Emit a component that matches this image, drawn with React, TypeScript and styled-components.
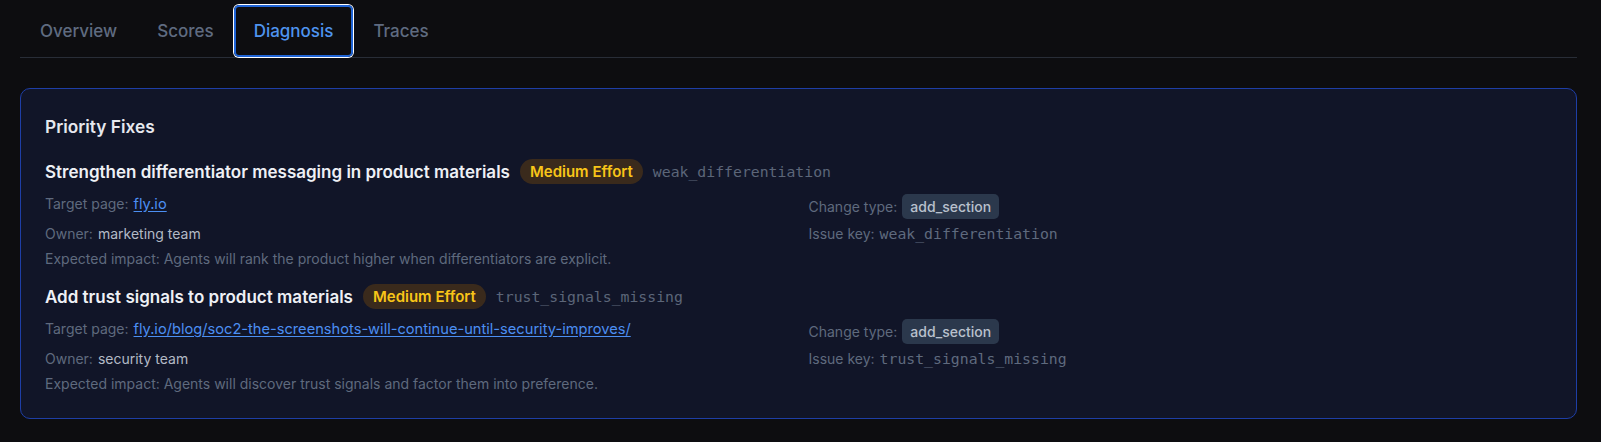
import styled, { createGlobalStyle } from "styled-components";

const GlobalStyle = createGlobalStyle`
  html, body {
    margin: 0;
    padding: 0;
    background: #0d0d10;
  }
  body {
    font-family: Inter, "Noto Sans", sans-serif;
    -webkit-font-smoothing: antialiased;
  }
`;

const Page = styled.div`
  padding: 5px 24px 23px 20px;
  background: #0d0d10;
  min-height: 100vh;
  box-sizing: border-box;
`;

const TabBar = styled.div`
  display: flex;
  border-bottom: 1px solid #282d37;
`;

const Tab = styled.button<{ $active?: boolean }>`
  height: 52px;
  padding: 0 20px;
  border: none;
  border-radius: 5px;
  background: transparent;
  font-family: inherit;
  font-size: 17px;
  font-weight: 500;
  color: ${(p) => (p.$active ? "#4f94ef" : "#5f6b80")};
  box-shadow: ${(p) => (p.$active ? "inset 0 0 0 2px #1f64d6, 0 0 0 1px #ffffff" : "none")};
  cursor: pointer;
`;

const Card = styled.section`
  margin-top: 30px;
  border: 1px solid #1e3ea6;
  border-radius: 10px;
  background: #111528;
  padding: 24px;
`;

const Heading = styled.h3`
  margin: 0 0 18px;
  font-size: 17.3px;
  line-height: 28px;
  font-weight: 600;
  color: #e6e8ee;
`;

const FixList = styled.div`
  display: flex;
  flex-direction: column;
  gap: 15px;
`;

const Fix = styled.div`
  display: flex;
  flex-direction: column;
  gap: 10px;
`;

const TitleRow = styled.div`
  display: flex;
  align-items: center;
  gap: 10px;
  height: 25px;
`;

const Title = styled.span`
  font-size: 17px;
  font-weight: 600;
  color: #eef0f5;
`;

const EffortBadge = styled.span`
  display: inline-flex;
  align-items: center;
  height: 25px;
  padding: 0 10px;
  border-radius: 999px;
  background: #3a2a1c;
  color: #f8c518;
  font-size: 15px;
  font-weight: 600;
`;

const Mono = styled.span<{ $color?: string }>`
  font-family: "DejaVu Sans Mono", "Liberation Mono", monospace;
  font-size: 14.8px;
  color: ${(p) => p.$color ?? "#5c6679"};
`;

const Details = styled.div`
  display: grid;
  grid-template-columns: 1fr 1fr;
  column-gap: 20px;
  row-gap: 5px;
  font-size: 14px;
  line-height: 20px;
  color: #5f6a7e;
`;

const Field = styled.div<{ $top?: boolean }>`
  display: flex;
  align-items: center;
  gap: 5px;
  min-height: 20px;
  align-self: ${(p) => (p.$top ? "start" : "center")};
`;

const Value = styled.span`
  color: #b3bac6;
`;

const PageLink = styled.a`
  color: #4c8ff2;
  text-decoration: underline;
  text-underline-offset: 2px;
  font-size: 14.65px;
`;

const Chip = styled.span`
  display: inline-flex;
  align-items: center;
  height: 25px;
  padding: 0 8px;
  border-radius: 5px;
  background: #2b384c;
  color: #b9c1cd;
  font-size: 14px;
  font-weight: 500;
`;

type FixItem = {
  title: string;
  key: string;
  target: string;
  owner: string;
  impact: string;
  changeType: string;
};

const fixes: FixItem[] = [
  {
    title: "Strengthen differentiator messaging in product materials",
    key: "weak_differentiation",
    target: "fly.io",
    owner: "marketing team",
    impact: "Agents will rank the product higher when differentiators are explicit.",
    changeType: "add_section",
  },
  {
    title: "Add trust signals to product materials",
    key: "trust_signals_missing",
    target: "fly.io/blog/soc2-the-screenshots-will-continue-until-security-improves/",
    owner: "security team",
    impact: "Agents will discover trust signals and factor them into preference.",
    changeType: "add_section",
  },
];

const tabs = ["Overview", "Scores", "Diagnosis", "Traces"];

export default function App() {
  return (
    <>
      <GlobalStyle />
      <Page>
        <TabBar>
          {tabs.map((t) => (
            <Tab key={t} $active={t === "Diagnosis"}>
              {t}
            </Tab>
          ))}
        </TabBar>
        <Card>
          <Heading>Priority Fixes</Heading>
          <FixList>
            {fixes.map((f) => (
              <Fix key={f.key}>
                <TitleRow>
                  <Title>{f.title}</Title>
                  <EffortBadge>Medium Effort</EffortBadge>
                  <Mono>{f.key}</Mono>
                </TitleRow>
                <Details>
                  <Field $top>
                    Target page: <PageLink href="#">{f.target}</PageLink>
                  </Field>
                  <Field>
                    Change type: <Chip>{f.changeType}</Chip>
                  </Field>
                  <Field>
                    Owner: <Value>{f.owner}</Value>
                  </Field>
                  <Field>
                    Issue key: <Mono $color="#5f6a7e">{f.key}</Mono>
                  </Field>
                  <Field>Expected impact: {f.impact}</Field>
                </Details>
              </Fix>
            ))}
          </FixList>
        </Card>
      </Page>
    </>
  );
}
